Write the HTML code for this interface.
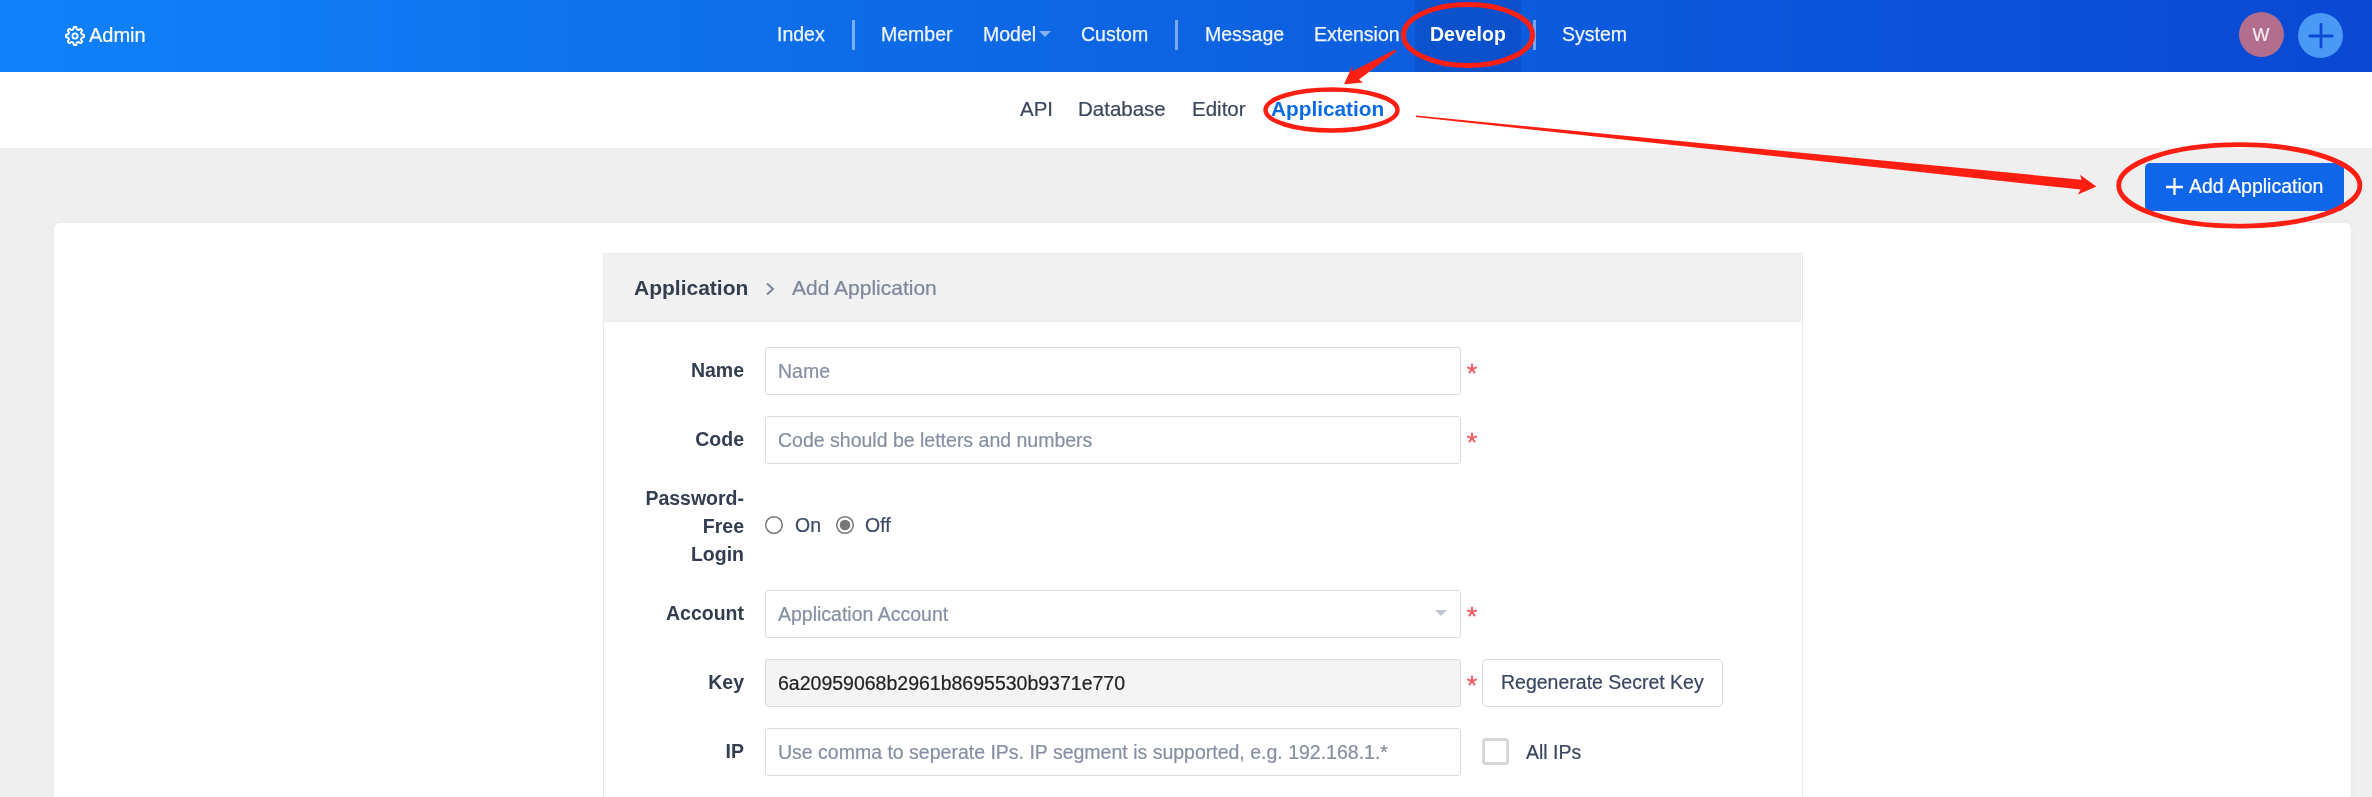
<!DOCTYPE html>
<html><head><meta charset="utf-8">
<style>
*{margin:0;padding:0;box-sizing:border-box}
html,body{width:2372px;height:797px;overflow:hidden;background:#efefef;font-family:"Liberation Sans",sans-serif}
body{will-change:transform;-webkit-text-stroke-width:0.2px}
.a{position:absolute;white-space:nowrap}
#nav{position:absolute;left:0;top:0;width:2372px;height:72px;background:linear-gradient(90deg,#1082fa 0%,#0e69e6 40%,#0c5bdd 65%,#0a48d4 100%)}
.ni{position:absolute;top:24px;font-size:19.5px;line-height:20px;color:#eef4ff;-webkit-text-stroke:0.25px #eef4ff}
.sep{position:absolute;top:20px;width:3px;height:30px;background:rgba(255,255,255,0.45)}
#sub{position:absolute;left:0;top:72px;width:2372px;height:76px;background:#fff}
.si{position:absolute;top:98.4px;font-size:20.5px;line-height:21px;color:#3b475c}
#card{position:absolute;left:54px;top:223px;width:2297px;height:700px;background:#fff;border-radius:6px;box-shadow:0 0 6px rgba(0,0,0,0.035)}
#panel{position:absolute;left:603px;top:253px;width:1200px;height:700px;border:1px solid #eaeaea;background:#fff}
#phead{position:absolute;left:0;top:0;width:1197px;height:68px;background:#f1f1f1;border-bottom:1px solid #e9e9e9}
.lbl{position:absolute;font-size:19.5px;font-weight:bold;color:#333d50;text-align:right;line-height:28px;-webkit-text-stroke-width:0}
.b0{-webkit-text-stroke-width:0 !important}
.inp{position:absolute;left:765px;width:696px;height:48px;border:1px solid #dcdcdc;border-radius:3px;background:#fff}
.ph{position:absolute;left:12px;top:13px;font-size:19.5px;line-height:20px;color:#878fa3;white-space:nowrap}
.req{position:absolute;left:1467px;font-size:28px;color:#f5535a;line-height:20px}
</style></head><body>
<div id="nav">
  <svg class="a" style="left:62px;top:23px" width="26" height="26" viewBox="0 0 26 26"><path fill="none" stroke="#fff" stroke-width="1.9" stroke-linejoin="round" d="M13.00 3.90 13.24 3.90 13.48 3.91 13.71 3.93 13.95 3.95 14.17 4.10 14.35 4.48 14.48 5.01 14.58 5.57 14.67 6.06 14.77 6.38 14.93 6.48 15.10 6.53 15.27 6.59 15.44 6.65 15.60 6.72 15.77 6.79 15.93 6.86 16.09 6.94 16.24 7.02 16.43 7.06 16.73 6.91 17.14 6.63 17.60 6.30 18.07 6.02 18.46 5.88 18.73 5.93 18.91 6.08 19.09 6.24 19.26 6.40 19.43 6.57 19.60 6.74 19.76 6.91 19.92 7.09 20.07 7.27 20.12 7.54 19.98 7.93 19.70 8.40 19.37 8.86 19.09 9.27 18.94 9.57 18.98 9.76 19.06 9.91 19.14 10.07 19.21 10.23 19.28 10.40 19.35 10.56 19.41 10.73 19.47 10.90 19.52 11.07 19.62 11.23 19.94 11.33 20.43 11.42 20.99 11.52 21.52 11.65 21.90 11.83 22.05 12.05 22.07 12.29 22.09 12.52 22.10 12.76 22.10 13.00 22.10 13.24 22.09 13.48 22.07 13.71 22.05 13.95 21.90 14.17 21.52 14.35 20.99 14.48 20.43 14.58 19.94 14.67 19.62 14.77 19.52 14.93 19.47 15.10 19.41 15.27 19.35 15.44 19.28 15.60 19.21 15.77 19.14 15.93 19.06 16.09 18.98 16.24 18.94 16.43 19.09 16.73 19.37 17.14 19.70 17.60 19.98 18.07 20.12 18.46 20.07 18.73 19.92 18.91 19.76 19.09 19.60 19.26 19.43 19.43 19.26 19.60 19.09 19.76 18.91 19.92 18.73 20.07 18.46 20.12 18.07 19.98 17.60 19.70 17.14 19.37 16.73 19.09 16.43 18.94 16.24 18.98 16.09 19.06 15.93 19.14 15.77 19.21 15.60 19.28 15.44 19.35 15.27 19.41 15.10 19.47 14.93 19.52 14.77 19.62 14.67 19.94 14.58 20.43 14.48 20.99 14.35 21.52 14.17 21.90 13.95 22.05 13.71 22.07 13.48 22.09 13.24 22.10 13.00 22.10 12.76 22.10 12.52 22.09 12.29 22.07 12.05 22.05 11.83 21.90 11.65 21.52 11.52 20.99 11.42 20.43 11.33 19.94 11.23 19.62 11.07 19.52 10.90 19.47 10.73 19.41 10.56 19.35 10.40 19.28 10.23 19.21 10.07 19.14 9.91 19.06 9.76 18.98 9.57 18.94 9.27 19.09 8.86 19.37 8.40 19.70 7.93 19.98 7.54 20.12 7.27 20.07 7.09 19.92 6.91 19.76 6.74 19.60 6.57 19.43 6.40 19.26 6.24 19.09 6.08 18.91 5.93 18.73 5.88 18.46 6.02 18.07 6.30 17.60 6.63 17.14 6.91 16.73 7.06 16.43 7.02 16.24 6.94 16.09 6.86 15.93 6.79 15.77 6.72 15.60 6.65 15.44 6.59 15.27 6.53 15.10 6.48 14.93 6.38 14.77 6.06 14.67 5.57 14.58 5.01 14.48 4.48 14.35 4.10 14.17 3.95 13.95 3.93 13.71 3.91 13.48 3.90 13.24 3.90 13.00 3.90 12.76 3.91 12.52 3.93 12.29 3.95 12.05 4.10 11.83 4.48 11.65 5.01 11.52 5.57 11.42 6.06 11.33 6.38 11.23 6.48 11.07 6.53 10.90 6.59 10.73 6.65 10.56 6.72 10.40 6.79 10.23 6.86 10.07 6.94 9.91 7.02 9.76 7.06 9.57 6.91 9.27 6.63 8.86 6.30 8.40 6.02 7.93 5.88 7.54 5.93 7.27 6.08 7.09 6.24 6.91 6.40 6.74 6.57 6.57 6.74 6.40 6.91 6.24 7.09 6.08 7.27 5.93 7.54 5.88 7.93 6.02 8.40 6.30 8.86 6.63 9.27 6.91 9.57 7.06 9.76 7.02 9.91 6.94 10.07 6.86 10.23 6.79 10.40 6.72 10.56 6.65 10.73 6.59 10.90 6.53 11.07 6.48 11.23 6.38 11.33 6.06 11.42 5.57 11.52 5.01 11.65 4.48 11.83 4.10 12.05 3.95 12.29 3.93 12.52 3.91 12.76 3.90Z"/><circle cx="13" cy="13" r="2.6" fill="none" stroke="#fff" stroke-width="1.8"/></svg>
  <div class="a" style="left:89px;top:25px;font-size:20px;line-height:20px;color:#fff">Admin</div>
  <div class="ni" style="left:777px">Index</div>
  <div class="sep" style="left:852px"></div>
  <div class="ni" style="left:881px">Member</div>
  <div class="ni" style="left:983px">Model</div>
  <svg class="a" style="left:1039px;top:31px" width="12" height="7"><path d="M0 0h12L6 6z" fill="rgba(255,255,255,0.5)"/></svg>
  <div class="ni" style="left:1081px">Custom</div>
  <div class="sep" style="left:1175px"></div>
  <div class="ni" style="left:1205px">Message</div>
  <div class="ni" style="left:1314px">Extension</div>
  <div class="a" style="left:1415px;top:0;width:106px;height:72px;background:rgba(10,40,140,0.22)"></div>
  <div class="ni b0" style="left:1430px;font-weight:bold;color:#fff">Develop</div>
  <div class="sep" style="left:1533px"></div>
  <div class="ni" style="left:1562px">System</div>
  <div class="a" style="left:2239px;top:12px;width:45px;height:45px;border-radius:50%;background:#b26e8c;color:#f4eef4;font-size:18px;line-height:47px;text-align:center;text-indent:-1px">W</div>
  <div class="a" style="left:2298px;top:12.5px;width:45px;height:45px;border-radius:50%;background:#4a9af5"></div>
  <svg class="a" style="left:2298px;top:12.5px" width="45" height="45"><path d="M11.8 23h22.4M23 11.5v22.6" stroke="#0b4ad5" stroke-width="2.8" stroke-linecap="round"/></svg>
</div>
<div id="sub">
</div>
<div class="si" style="left:1020px">API</div>
<div class="si" style="left:1078px">Database</div>
<div class="si" style="left:1192px">Editor</div>
<div class="si b0" style="left:1271px;font-weight:bold;color:#0b6ae6;font-size:20.8px">Application</div>

<div class="a" style="left:2145px;top:163px;width:199px;height:48px;border-radius:5px;background:#0f66e9"></div>
<svg class="a" style="left:2166px;top:178px" width="18" height="18"><path d="M0 9h17M8.5 0v17" stroke="#fff" stroke-width="2.3"/></svg>
<div class="a" style="left:2189px;top:176px;font-size:19.5px;line-height:20px;color:#fff">Add Application</div>

<div id="card"></div>
<div id="panel"><div id="phead"></div></div>
<div class="a b0" style="left:634px;top:277px;font-size:21px;line-height:21px;font-weight:bold;color:#333d50">Application</div>
<svg class="a" style="left:765px;top:282px" width="12" height="14"><path d="M2 1.5l6 5.5-6 5.5" fill="none" stroke="#7b8599" stroke-width="2"/></svg>
<div class="a" style="left:792px;top:277px;font-size:21px;line-height:21px;color:#7d879b">Add Application</div>

<!-- Name -->
<div class="lbl" style="left:600px;width:144px;top:356px">Name</div>
<div class="inp" style="top:347px"><div class="ph">Name</div></div>
<svg class="a" style="left:1462.3px;top:358.8px" width="20" height="20"><path d="M10 10L10.00 5.60M10 10L14.18 8.64M10 10L12.59 13.56M10 10L7.41 13.56M10 10L5.82 8.64" stroke="#f85d65" stroke-width="2" stroke-linecap="round"/></svg>
<!-- Code -->
<div class="lbl" style="left:600px;width:144px;top:425px">Code</div>
<div class="inp" style="top:416px"><div class="ph">Code should be letters and numbers</div></div>
<svg class="a" style="left:1462.3px;top:427.8px" width="20" height="20"><path d="M10 10L10.00 5.60M10 10L14.18 8.64M10 10L12.59 13.56M10 10L7.41 13.56M10 10L5.82 8.64" stroke="#f85d65" stroke-width="2" stroke-linecap="round"/></svg>
<!-- Password-free -->
<div class="lbl" style="left:600px;width:144px;top:484px">Password-<br>Free<br>Login</div>
<svg class="a" style="left:764px;top:515px" width="20" height="20"><circle cx="10" cy="10" r="8.3" fill="#fff" stroke="#777" stroke-width="1.5"/></svg>
<div class="a" style="left:795px;top:515px;font-size:19.5px;line-height:20px;color:#3a4a66">On</div>
<svg class="a" style="left:835px;top:515px" width="20" height="20"><circle cx="10" cy="10" r="8.3" fill="#fff" stroke="#777" stroke-width="1.5"/><circle cx="10" cy="10" r="5.3" fill="#777"/></svg>
<div class="a" style="left:865px;top:515px;font-size:19.5px;line-height:20px;color:#3a4a66">Off</div>
<!-- Account -->
<div class="lbl" style="left:600px;width:144px;top:599px">Account</div>
<div class="inp" style="top:590px"><div class="ph">Application Account</div></div>
<svg class="a" style="left:1435px;top:610px" width="12" height="6"><path d="M0 0h12L6 6z" fill="#c0c6d4"/></svg>
<svg class="a" style="left:1462.3px;top:601.8px" width="20" height="20"><path d="M10 10L10.00 5.60M10 10L14.18 8.64M10 10L12.59 13.56M10 10L7.41 13.56M10 10L5.82 8.64" stroke="#f85d65" stroke-width="2" stroke-linecap="round"/></svg>
<!-- Key -->
<div class="lbl" style="left:600px;width:144px;top:668px">Key</div>
<div class="inp" style="top:659px;background:#f4f4f4"><div class="ph" style="color:#222">6a20959068b2961b8695530b9371e770</div></div>
<svg class="a" style="left:1462.3px;top:670.8px" width="20" height="20"><path d="M10 10L10.00 5.60M10 10L14.18 8.64M10 10L12.59 13.56M10 10L7.41 13.56M10 10L5.82 8.64" stroke="#f85d65" stroke-width="2" stroke-linecap="round"/></svg>
<div class="a" style="left:1482px;top:659px;width:241px;height:48px;border:1px solid #d3d9e5;border-radius:5px;background:#fff"></div>
<div class="a" style="left:1501px;top:672px;font-size:19.5px;line-height:20px;color:#3a4660">Regenerate Secret Key</div>
<!-- IP -->
<div class="lbl" style="left:600px;width:144px;top:737px">IP</div>
<div class="inp" style="top:728px"><div class="ph">Use comma to seperate IPs. IP segment is supported, e.g. 192.168.1.*</div></div>
<div class="a" style="left:1482px;top:738px;width:27px;height:27px;border:3px solid #d6d6d6;border-radius:4px;background:#fff"></div>
<div class="a" style="left:1526px;top:742px;font-size:19.5px;line-height:20px;color:#3a4660">All IPs</div>

<!-- annotations -->
<svg class="a" style="left:0;top:0" width="2372" height="797">
  <g fill="none" stroke="#ff1f12" stroke-width="5">
    <ellipse cx="1468" cy="35" rx="64.5" ry="30.5"/>
    <ellipse cx="1331.5" cy="110" rx="66" ry="20.5" stroke-width="4.5"/>
    <ellipse cx="2239.3" cy="185.4" rx="120.6" ry="40.7" stroke-width="4.8"/>
  </g>
  <g fill="#ff1f12">
    <path d="M1395.4 49.6L1352.5 71.3 1352.2 66.2 1344 84.2 1363 82.5 1359 79.4 1396.5 51.2z"/>
    <path d="M1416 115.6L2081.7 179.7 2080 174.8 2096.4 186.5 2077.9 194.4 2080.6 189.5 1416 117z"/>
  </g>
</svg>
</body></html>
